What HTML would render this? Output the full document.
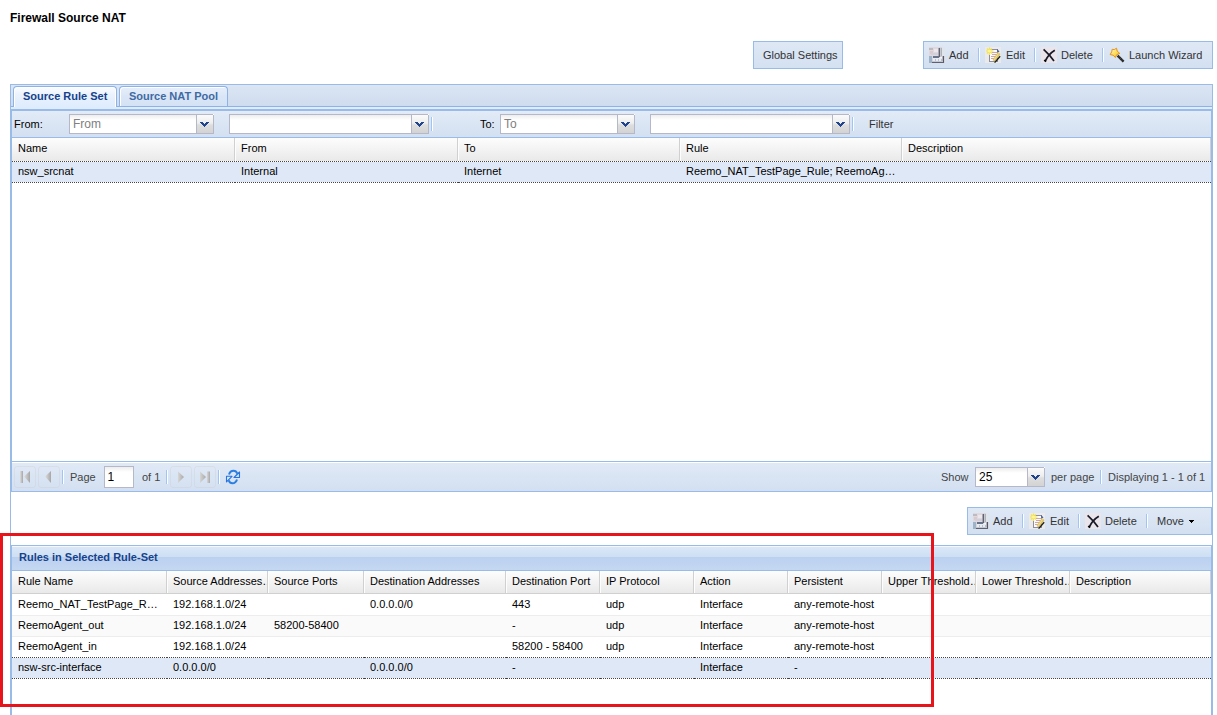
<!DOCTYPE html>
<html><head><meta charset="utf-8">
<style>
*{box-sizing:border-box;margin:0;padding:0}
html,body{width:1217px;height:715px;overflow:hidden;background:#fff}
body{position:relative;font-family:"Liberation Sans",sans-serif;font-size:11px;color:#000}
.a{position:absolute}
.t{position:absolute;white-space:nowrap;line-height:13px;font-size:11px}
.b{font-weight:bold}
.tb{position:absolute;border:1px solid #99bbe8;background:linear-gradient(#dfe8f5,#d3e0f1)}
.sep{position:absolute;width:2px;height:14px;border-left:1px solid #9cc6f8;background:#fff}
.combo{position:absolute;height:20px;border:1px solid #b5b8c8;background:linear-gradient(#ededed 0,#fff 5px,#fff)}
.trig{position:absolute;top:-1px;right:-1px;width:18px;height:20px;border:1px solid #b5b8c8;background:linear-gradient(#fbfbfb,#eeeeee 45%,#dedede 55%,#d3d3d3)}
.trig svg{position:absolute;left:3px;top:7px}
.trig:after{content:"";position:absolute;right:-1px;top:-1px;width:1px;height:1px;background:#fff}
.hd{position:absolute;background:linear-gradient(#fdfdfd,#f3f3f3 50%,#e9e9e9)}
.hdiv{position:absolute;top:0;bottom:0;width:2px;border-left:1px solid #d0d0d0;background:#fdfdfd}
.gray{color:#333}
.dl{position:absolute;height:1px;background:repeating-linear-gradient(90deg,#444 0,#444 1px,transparent 1px,transparent 2px)}
.pg{color:#444}
</style></head><body>

<div class="t b" style="left:10px;top:11px;font-size:12px;line-height:14px">Firewall Source NAT</div>

<!-- Global settings button -->
<div class="a" style="left:753px;top:41px;width:90px;height:28px;border:1px solid #99bbe8;background:linear-gradient(#dee8f5,#d4e1f1)"></div>
<div class="t gray" style="left:763px;top:49px">Global Settings</div>

<!-- top toolbar -->
<div class="tb" style="left:923px;top:41px;width:290px;height:28px"></div>
<div class="sep" style="left:978px;top:48px"></div>
<div class="sep" style="left:1034px;top:48px"></div>
<div class="sep" style="left:1102px;top:48px"></div>
<div class="t gray" style="left:949px;top:49px">Add</div>
<div class="t gray" style="left:1006px;top:49px">Edit</div>
<div class="t gray" style="left:1061px;top:49px">Delete</div>
<div class="t gray" style="left:1129px;top:49px">Launch Wizard</div>

<div class="a" style="left:929px;top:47px;width:16px;height:16px;line-height:0"><svg width="16" height="16" viewBox="0 0 16 16" shape-rendering="crispEdges"><rect width="16" height="16" fill="#d8d5dc"/><rect x="0" y="0" width="10" height="9" fill="#e0d8dc"/><rect x="0" y="1" width="4" height="2" fill="#bdbbc2"/><rect x="5" y="2" width="4" height="3" fill="#ece7ec"/><rect x="1" y="4" width="3" height="3" fill="#dacaca"/><rect x="2" y="6" width="8" height="2" fill="#cfd2de"/><rect x="9" y="1" width="1" height="9" fill="#a9a9b6"/><rect x="10" y="1" width="1" height="9" fill="#62626f"/><rect x="11" y="1" width="1" height="9" fill="#c8c8d0"/><rect x="12" y="1" width="1" height="8" fill="#aeb2ba"/><rect x="13" y="0" width="3" height="9" fill="#dfe5ea"/><rect x="4" y="9" width="6" height="2" fill="#66718a"/><rect x="0" y="9" width="3" height="7" fill="#9fb3c8"/><rect x="4" y="11" width="10" height="4" fill="#e6ecf2"/><rect x="6" y="12" width="1" height="2" fill="#bcc0ca"/><rect x="9" y="12" width="1" height="2" fill="#bcc0ca"/><rect x="12" y="12" width="1" height="2" fill="#bcc0ca"/><rect x="13" y="9" width="1" height="6" fill="#b4b4bf"/><rect x="14" y="9" width="1" height="7" fill="#555563"/><rect x="3" y="15" width="12" height="1" fill="#606070"/><rect x="3" y="14" width="11" height="1" fill="#c4c8d2"/><rect x="11" y="10" width="2" height="1" fill="#f2f6fa"/></svg></div>
<div class="a" style="left:985px;top:47px;width:16px;height:16px;line-height:0"><svg width="16" height="16" viewBox="0 0 16 16"><rect width="16" height="16" fill="#efebe8" opacity="0.85"/><rect x="4.5" y="2.5" width="8" height="12" fill="#fbfbfb" stroke="#8c8ea0"/><path d="M7 5.5H12M7 7.5H12M6 9.5H11M6 11.5H9" stroke="#cf9a96" stroke-width="0.9"/><path d="M12 2L14.5 4.5L12.5 5.5Z" fill="#3a58a8"/><path d="M1 4H8.5M4.5 0.5V8M2 1.5L7 6.5M7 1.5L2 6.5" stroke="#f4e24c" stroke-width="1.2"/><circle cx="4.5" cy="4" r="1.6" fill="#fff690"/><path d="M14.2 6L8.8 13.8" stroke="#dcc262" stroke-width="3.2"/><path d="M15.2 9.2L9.6 15.6" stroke="#1e1e1e" stroke-width="1.3"/><path d="M13.5 6.5L9 13" stroke="#f2e6b0" stroke-width="0.8"/></svg></div>
<div class="a" style="left:1041px;top:47px;width:16px;height:16px;line-height:0"><svg width="16" height="16" viewBox="0 0 16 16"><rect width="16" height="16" fill="#e9e5ea"/><path d="M2.6 2.4C6 5.5 9.5 9 13 14" stroke="#1a1a26" stroke-width="1.7" fill="none"/><path d="M13.8 3.2C10 5.5 6.5 9 4.2 14.2" stroke="#1a1a26" stroke-width="1.8" fill="none"/><path d="M3.2 13.2L5 14.6" stroke="#000" stroke-width="1.6"/></svg></div>
<div class="a" style="left:1109px;top:47px;width:16px;height:16px;line-height:0"><svg width="16" height="16" viewBox="0 0 16 16"><defs><linearGradient id="wg" x1="0" y1="0" x2="1" y2="1"><stop offset="0" stop-color="#fffbd8"/><stop offset="0.6" stop-color="#fbd84a"/><stop offset="1" stop-color="#f0b020"/></linearGradient></defs><path d="M8.6 8.6L14.6 14.6" stroke="#2a2a2a" stroke-width="2.4"/><path d="M9.4 10.2L10.2 9.4M11 11.8L11.8 11M12.6 13.4L13.4 12.6" stroke="#777" stroke-width="0.6"/><path d="M7.5 1.2L8.2 4.2L10.8 6.4L7.7 7.7L6.4 10.5L4.2 8.2L1.2 7.6L2.7 4.8L3.2 2.3L5.3 2.6Z" fill="url(#wg)" stroke="#e8901a" stroke-width="1" stroke-linejoin="round"/></svg></div>
<!-- outer container borders -->
<div class="a" style="left:10px;top:84px;width:1203px;height:640px;border:1px solid #99bbe8;border-bottom:none"></div>

<!-- tab strip -->
<div class="a" style="left:11px;top:85px;width:1201px;height:22px;background:linear-gradient(#dbe5f3,#cfdcef);border-bottom:1px solid #8db2e3"></div>
<div class="a" style="left:13px;top:86px;width:104px;height:21px;border:1px solid #8db2e3;border-bottom:none;border-radius:4px 4px 0 0;background:linear-gradient(#fbfdff,#eaf2fd 40%,#deecfd);box-shadow:inset 1px 1px 0 #fff,inset -1px 0 0 #fff"></div>
<div class="a" style="left:119px;top:86px;width:109px;height:20px;border:1px solid #8db2e3;border-bottom:none;border-radius:4px 4px 0 0;background:linear-gradient(#e6eefa,#dae6f7 50%,#d4e2f5);box-shadow:inset 1px 1px 0 #fff"></div>
<div class="t b" style="left:23px;top:90px;color:#15428b">Source Rule Set</div>
<div class="t b" style="left:129px;top:90px;color:#416aa3">Source NAT Pool</div>
<!-- spacer -->
<div class="a" style="left:11px;top:107px;width:1201px;height:3px;background:#deecfd;border-bottom:1px solid #99bbe8"></div>

<!-- filter toolbar -->
<div class="a" style="left:11px;top:110px;width:1201px;height:28px;border:1px solid #99bbe8;background:linear-gradient(#e2ebf7,#d3e0f1)"></div>
<div class="t" style="left:14px;top:118px">From:</div>
<div class="combo" style="left:69px;top:114px;width:145px"><div class="trig"><svg width="9" height="5" shape-rendering="crispEdges"><path d="M0 0H3V1H4V2H5V1H6V0H9V1H8V2H7V3H6V4H5V5H4V4H3V3H2V2H1V1H0Z" fill="#21448e"/></svg></div></div>
<div class="t" style="left:73px;top:118px;font-size:12px;color:#808080">From</div>
<div class="combo" style="left:229px;top:114px;width:200px"><div class="trig"><svg width="9" height="5" shape-rendering="crispEdges"><path d="M0 0H3V1H4V2H5V1H6V0H9V1H8V2H7V3H6V4H5V5H4V4H3V3H2V2H1V1H0Z" fill="#21448e"/></svg></div></div>
<div class="sep" style="left:431px;top:117px"></div>
<div class="t" style="left:480px;top:118px">To:</div>
<div class="combo" style="left:500px;top:114px;width:135px"><div class="trig"><svg width="9" height="5" shape-rendering="crispEdges"><path d="M0 0H3V1H4V2H5V1H6V0H9V1H8V2H7V3H6V4H5V5H4V4H3V3H2V2H1V1H0Z" fill="#21448e"/></svg></div></div>
<div class="t" style="left:504px;top:118px;font-size:12px;color:#808080">To</div>
<div class="combo" style="left:650px;top:114px;width:200px"><div class="trig"><svg width="9" height="5" shape-rendering="crispEdges"><path d="M0 0H3V1H4V2H5V1H6V0H9V1H8V2H7V3H6V4H5V5H4V4H3V3H2V2H1V1H0Z" fill="#21448e"/></svg></div></div>
<div class="sep" style="left:852px;top:117px"></div>
<div class="t gray" style="left:869px;top:118px">Filter</div>

<!-- upper grid -->
<div class="a" style="left:11px;top:138px;width:1201px;height:324px;border-left:1px solid #99bbe8;border-right:1px solid #99bbe8;background:#fff"></div>
<div class="hd" style="left:12px;top:138px;width:1199px;height:23px">
  <div class="hdiv" style="left:222px"></div>
  <div class="hdiv" style="left:445px"></div>
  <div class="hdiv" style="left:667px"></div>
  <div class="hdiv" style="left:889px"></div>
  <div class="a" style="left:1198px;top:0;bottom:0;width:1px;background:#d0d0d0"></div>
</div>
<div class="t" style="left:18px;top:142px">Name</div>
<div class="t" style="left:241px;top:142px">From</div>
<div class="t" style="left:464px;top:142px">To</div>
<div class="t" style="left:686px;top:142px">Rule</div>
<div class="t" style="left:908px;top:142px">Description</div>
<div class="a" style="left:12px;top:162px;width:1199px;height:20px;background:#dfe8f6"></div>
<div class="t" style="left:18px;top:165px">nsw_srcnat</div>
<div class="t" style="left:241px;top:165px">Internal</div>
<div class="t" style="left:464px;top:165px">Internet</div>
<div class="t" style="left:686px;top:165px">Reemo_NAT_TestPage_Rule; ReemoAg&hellip;</div>

<!-- paging bar -->
<div class="a" style="left:11px;top:461px;width:1201px;height:31px;border:1px solid #99bbe8;background:linear-gradient(#fff 0,#fff 1px,#e0e9f6 1px,#d3e0f1)"></div>
<div class="sep" style="left:62px;top:470px"></div>
<div class="t pg" style="left:70px;top:471px">Page</div>
<div class="a" style="left:104px;top:466px;width:30px;height:22px;border:1px solid #b5b8c8;background:linear-gradient(#ededed 0,#fff 5px,#fff)"></div>
<div class="t" style="left:107.5px;top:471px;font-size:12px">1</div>
<div class="t pg" style="left:142px;top:471px">of 1</div>
<div class="sep" style="left:166px;top:470px"></div>
<div class="sep" style="left:218px;top:470px"></div>
<div class="a" style="left:14px;top:466px;width:22px;height:22px;border:1px solid rgba(190,185,180,0.18);border-radius:3px"></div>
<div class="a" style="left:38px;top:466px;width:22px;height:22px;border:1px solid rgba(190,185,180,0.18);border-radius:3px"></div>
<div class="a" style="left:170px;top:466px;width:22px;height:22px;border:1px solid rgba(190,185,180,0.18);border-radius:3px"></div>
<div class="a" style="left:194px;top:466px;width:22px;height:22px;border:1px solid rgba(190,185,180,0.18);border-radius:3px"></div>
<svg class="a" style="left:19px;top:471px" width="12" height="12"><defs><linearGradient id="g1" x1="0" y1="0" x2="1" y2="0"><stop offset="0" stop-color="#dedede"/><stop offset="1" stop-color="#a6a6a6"/></linearGradient></defs><rect x="1" y="0" width="3" height="12" fill="url(#g1)"/><path d="M5 5.5L11 0V12Z" fill="url(#g1)"/></svg>
<svg class="a" style="left:44px;top:471px" width="8" height="12"><defs><linearGradient id="g2" x1="0" y1="0" x2="1" y2="0"><stop offset="0" stop-color="#dedede"/><stop offset="1" stop-color="#a6a6a6"/></linearGradient></defs><path d="M1 5.5L7 0V12Z" fill="url(#g2)"/></svg>
<svg class="a" style="left:177px;top:471px" width="8" height="12"><defs><linearGradient id="g3" x1="0" y1="0" x2="1" y2="0"><stop offset="0" stop-color="#d6d6d6"/><stop offset="1" stop-color="#a8a8a8"/></linearGradient></defs><path d="M7 6L1 0.5V12Z" fill="url(#g3)"/></svg>
<svg class="a" style="left:199px;top:471px" width="12" height="12"><defs><linearGradient id="g4" x1="0" y1="0" x2="1" y2="0"><stop offset="0" stop-color="#d6d6d6"/><stop offset="1" stop-color="#a8a8a8"/></linearGradient></defs><path d="M7 6L1 0.5V12Z" fill="url(#g4)"/><rect x="8" y="0.5" width="3" height="11.5" fill="url(#g4)"/></svg>
<div class="a" style="left:225px;top:469px;width:16px;height:16px;line-height:0"><svg width="16" height="16" viewBox="0 0 16 16"><path d="M4 5.5C4.8 3 6.5 1.8 8.5 1.8C10.3 1.8 11.6 2.8 12.3 4.6" stroke="#2a7fe2" stroke-width="2" fill="none"/><path d="M14.5 3V8.5H9Z" fill="#bfe3fd" stroke="#2a72dc" stroke-width="1.1" stroke-linejoin="round"/><path d="M12 10.5C11.2 13 9.5 14.3 7.5 14.3C5.7 14.3 4.4 13.2 3.7 11.4" stroke="#2a7fe2" stroke-width="2" fill="none"/><path d="M1.5 12.8V7.3H7Z" fill="#d2ecfe" stroke="#2a72dc" stroke-width="1.1" stroke-linejoin="round"/></svg></div>
<div class="t pg" style="left:941px;top:471px">Show</div>
<div class="combo" style="left:975px;top:467px;width:70px"><div class="trig"><svg width="9" height="5" shape-rendering="crispEdges"><path d="M0 0H3V1H4V2H5V1H6V0H9V1H8V2H7V3H6V4H5V5H4V4H3V3H2V2H1V1H0Z" fill="#21448e"/></svg></div></div>
<div class="t" style="left:979px;top:471px;font-size:12px">25</div>
<div class="t pg" style="left:1051px;top:471px">per page</div>
<div class="sep" style="left:1100px;top:470px"></div>
<div class="t pg" style="left:1108px;top:471px">Displaying 1 - 1 of 1</div>

<!-- lower toolbar -->
<div class="tb" style="left:967px;top:507px;width:245px;height:28px"></div>
<div class="sep" style="left:1022px;top:514px"></div>
<div class="sep" style="left:1078px;top:514px"></div>
<div class="sep" style="left:1146px;top:514px"></div>
<div class="t gray" style="left:993px;top:515px">Add</div>
<div class="t gray" style="left:1050px;top:515px">Edit</div>
<div class="t gray" style="left:1105px;top:515px">Delete</div>
<div class="t gray" style="left:1157px;top:515px">Move</div>

<div class="a" style="left:973px;top:513px;width:16px;height:16px;line-height:0"><svg width="16" height="16" viewBox="0 0 16 16" shape-rendering="crispEdges"><rect width="16" height="16" fill="#d8d5dc"/><rect x="0" y="0" width="10" height="9" fill="#e0d8dc"/><rect x="0" y="1" width="4" height="2" fill="#bdbbc2"/><rect x="5" y="2" width="4" height="3" fill="#ece7ec"/><rect x="1" y="4" width="3" height="3" fill="#dacaca"/><rect x="2" y="6" width="8" height="2" fill="#cfd2de"/><rect x="9" y="1" width="1" height="9" fill="#a9a9b6"/><rect x="10" y="1" width="1" height="9" fill="#62626f"/><rect x="11" y="1" width="1" height="9" fill="#c8c8d0"/><rect x="12" y="1" width="1" height="8" fill="#aeb2ba"/><rect x="13" y="0" width="3" height="9" fill="#dfe5ea"/><rect x="4" y="9" width="6" height="2" fill="#66718a"/><rect x="0" y="9" width="3" height="7" fill="#9fb3c8"/><rect x="4" y="11" width="10" height="4" fill="#e6ecf2"/><rect x="6" y="12" width="1" height="2" fill="#bcc0ca"/><rect x="9" y="12" width="1" height="2" fill="#bcc0ca"/><rect x="12" y="12" width="1" height="2" fill="#bcc0ca"/><rect x="13" y="9" width="1" height="6" fill="#b4b4bf"/><rect x="14" y="9" width="1" height="7" fill="#555563"/><rect x="3" y="15" width="12" height="1" fill="#606070"/><rect x="3" y="14" width="11" height="1" fill="#c4c8d2"/><rect x="11" y="10" width="2" height="1" fill="#f2f6fa"/></svg></div>
<div class="a" style="left:1029px;top:513px;width:16px;height:16px;line-height:0"><svg width="16" height="16" viewBox="0 0 16 16"><rect width="16" height="16" fill="#efebe8" opacity="0.85"/><rect x="4.5" y="2.5" width="8" height="12" fill="#fbfbfb" stroke="#8c8ea0"/><path d="M7 5.5H12M7 7.5H12M6 9.5H11M6 11.5H9" stroke="#cf9a96" stroke-width="0.9"/><path d="M12 2L14.5 4.5L12.5 5.5Z" fill="#3a58a8"/><path d="M1 4H8.5M4.5 0.5V8M2 1.5L7 6.5M7 1.5L2 6.5" stroke="#f4e24c" stroke-width="1.2"/><circle cx="4.5" cy="4" r="1.6" fill="#fff690"/><path d="M14.2 6L8.8 13.8" stroke="#dcc262" stroke-width="3.2"/><path d="M15.2 9.2L9.6 15.6" stroke="#1e1e1e" stroke-width="1.3"/><path d="M13.5 6.5L9 13" stroke="#f2e6b0" stroke-width="0.8"/></svg></div>
<div class="a" style="left:1085px;top:513px;width:16px;height:16px;line-height:0"><svg width="16" height="16" viewBox="0 0 16 16"><rect width="16" height="16" fill="#e9e5ea"/><path d="M2.6 2.4C6 5.5 9.5 9 13 14" stroke="#1a1a26" stroke-width="1.7" fill="none"/><path d="M13.8 3.2C10 5.5 6.5 9 4.2 14.2" stroke="#1a1a26" stroke-width="1.8" fill="none"/><path d="M3.2 13.2L5 14.6" stroke="#000" stroke-width="1.6"/></svg></div>
<svg class="a" style="left:1189px;top:520px" width="5" height="3" shape-rendering="crispEdges"><path d="M0 0H5V1H4V2H3V3H2V2H1V1H0Z" fill="#000"/></svg>
<!-- lower panel -->
<div class="a" style="left:11px;top:545px;width:1201px;height:180px;border:1px solid #99bbe8;background:#fff"></div>
<div class="a" style="left:12px;top:546px;width:1199px;height:25px;background:linear-gradient(#f4f8fd 0,#f4f8fd 1px,#dae7f7 1px,#cedff4 11px,#b8cfef 11px,#bcd1f0 12px,#c4d8f2 24px);border-bottom:1px solid #99bbe8"></div>
<div class="t b" style="left:19px;top:551px;color:#15428b">Rules in Selected Rule-Set</div>

<div class="hd" style="left:12px;top:571px;width:1199px;height:23px;border-bottom:1px solid #d0d0d0">
  <div class="hdiv" style="left:154px"></div>
  <div class="hdiv" style="left:255px"></div>
  <div class="hdiv" style="left:351px"></div>
  <div class="hdiv" style="left:493px"></div>
  <div class="hdiv" style="left:587px"></div>
  <div class="hdiv" style="left:681px"></div>
  <div class="hdiv" style="left:775px"></div>
  <div class="hdiv" style="left:869px"></div>
  <div class="hdiv" style="left:963px"></div>
  <div class="hdiv" style="left:1057px"></div>
  <div class="a" style="left:1198px;top:0;bottom:0;width:1px;background:#d0d0d0"></div>
</div>
<div class="t" style="left:18px;top:575px">Rule Name</div>
<div class="t" style="left:173px;top:575px;width:94px;overflow:hidden">Source Addresses&hellip;</div>
<div class="t" style="left:274px;top:575px">Source Ports</div>
<div class="t" style="left:370px;top:575px">Destination Addresses</div>
<div class="t" style="left:512px;top:575px">Destination Port</div>
<div class="t" style="left:606px;top:575px">IP Protocol</div>
<div class="t" style="left:700px;top:575px">Action</div>
<div class="t" style="left:794px;top:575px">Persistent</div>
<div class="t" style="left:888px;top:575px;width:87px;overflow:hidden">Upper Threshold&hellip;</div>
<div class="t" style="left:982px;top:575px;width:87px;overflow:hidden">Lower Threshold&hellip;</div>
<div class="t" style="left:1076px;top:575px">Description</div>
<div class="a" style="left:12px;top:615px;width:1199px;height:1px;background:#ededed"></div>
<div class="a" style="left:12px;top:616px;width:1199px;height:20px;background:#fafafa"></div>
<div class="a" style="left:12px;top:636px;width:1199px;height:1px;background:#ededed"></div>
<div class="a" style="left:12px;top:658px;width:1199px;height:20px;background:#dfe8f6"></div>
<div class="t" style="left:18px;top:598px">Reemo_NAT_TestPage_R&hellip;</div>
<div class="t" style="left:173px;top:598px">192.168.1.0/24</div>
<div class="t" style="left:370px;top:598px">0.0.0.0/0</div>
<div class="t" style="left:512px;top:598px">443</div>
<div class="t" style="left:606px;top:598px">udp</div>
<div class="t" style="left:700px;top:598px">Interface</div>
<div class="t" style="left:794px;top:598px">any-remote-host</div>
<div class="t" style="left:18px;top:619px">ReemoAgent_out</div>
<div class="t" style="left:173px;top:619px">192.168.1.0/24</div>
<div class="t" style="left:274px;top:619px">58200-58400</div>
<div class="t" style="left:512px;top:619px">-</div>
<div class="t" style="left:606px;top:619px">udp</div>
<div class="t" style="left:700px;top:619px">Interface</div>
<div class="t" style="left:794px;top:619px">any-remote-host</div>
<div class="t" style="left:18px;top:640px">ReemoAgent_in</div>
<div class="t" style="left:173px;top:640px">192.168.1.0/24</div>
<div class="t" style="left:512px;top:640px">58200 - 58400</div>
<div class="t" style="left:606px;top:640px">udp</div>
<div class="t" style="left:700px;top:640px">Interface</div>
<div class="t" style="left:794px;top:640px">any-remote-host</div>
<div class="t" style="left:18px;top:661px">nsw-src-interface</div>
<div class="t" style="left:173px;top:661px">0.0.0.0/0</div>
<div class="t" style="left:370px;top:661px">0.0.0.0/0</div>
<div class="t" style="left:512px;top:661px">-</div>
<div class="t" style="left:700px;top:661px">Interface</div>
<div class="t" style="left:794px;top:661px">-</div>

<!--dots-->
<div class="dl" style="left:12px;top:161px;width:1199px"></div>
<div class="dl" style="left:12px;top:182px;width:223px"></div><div class="dl" style="left:235px;top:182px;width:223px"></div><div class="dl" style="left:458px;top:182px;width:1px"></div><div class="dl" style="left:459px;top:182px;width:221px"></div><div class="dl" style="left:680px;top:182px;width:1px"></div><div class="dl" style="left:681px;top:182px;width:221px"></div><div class="dl" style="left:902px;top:182px;width:309px"></div>
<div class="dl" style="left:12px;top:657px;width:155px"></div><div class="dl" style="left:167px;top:657px;width:101px"></div><div class="dl" style="left:268px;top:657px;width:1px"></div><div class="dl" style="left:269px;top:657px;width:95px"></div><div class="dl" style="left:364px;top:657px;width:1px"></div><div class="dl" style="left:365px;top:657px;width:141px"></div><div class="dl" style="left:506px;top:657px;width:1px"></div><div class="dl" style="left:507px;top:657px;width:93px"></div><div class="dl" style="left:600px;top:657px;width:1px"></div><div class="dl" style="left:601px;top:657px;width:93px"></div><div class="dl" style="left:694px;top:657px;width:1px"></div><div class="dl" style="left:695px;top:657px;width:93px"></div><div class="dl" style="left:788px;top:657px;width:1px"></div><div class="dl" style="left:789px;top:657px;width:93px"></div><div class="dl" style="left:882px;top:657px;width:1px"></div><div class="dl" style="left:883px;top:657px;width:93px"></div><div class="dl" style="left:976px;top:657px;width:1px"></div><div class="dl" style="left:977px;top:657px;width:93px"></div><div class="dl" style="left:1070px;top:657px;width:141px"></div>
<div class="dl" style="left:12px;top:678px;width:155px"></div><div class="dl" style="left:167px;top:678px;width:101px"></div><div class="dl" style="left:268px;top:678px;width:1px"></div><div class="dl" style="left:269px;top:678px;width:95px"></div><div class="dl" style="left:364px;top:678px;width:1px"></div><div class="dl" style="left:365px;top:678px;width:141px"></div><div class="dl" style="left:506px;top:678px;width:1px"></div><div class="dl" style="left:507px;top:678px;width:93px"></div><div class="dl" style="left:600px;top:678px;width:1px"></div><div class="dl" style="left:601px;top:678px;width:93px"></div><div class="dl" style="left:694px;top:678px;width:1px"></div><div class="dl" style="left:695px;top:678px;width:93px"></div><div class="dl" style="left:788px;top:678px;width:1px"></div><div class="dl" style="left:789px;top:678px;width:93px"></div><div class="dl" style="left:882px;top:678px;width:1px"></div><div class="dl" style="left:883px;top:678px;width:93px"></div><div class="dl" style="left:976px;top:678px;width:1px"></div><div class="dl" style="left:977px;top:678px;width:93px"></div><div class="dl" style="left:1070px;top:678px;width:141px"></div>
<div class="a" style="left:0;top:533px;width:934px;height:174px;border:3px solid #e8141c"></div>
</body></html>
